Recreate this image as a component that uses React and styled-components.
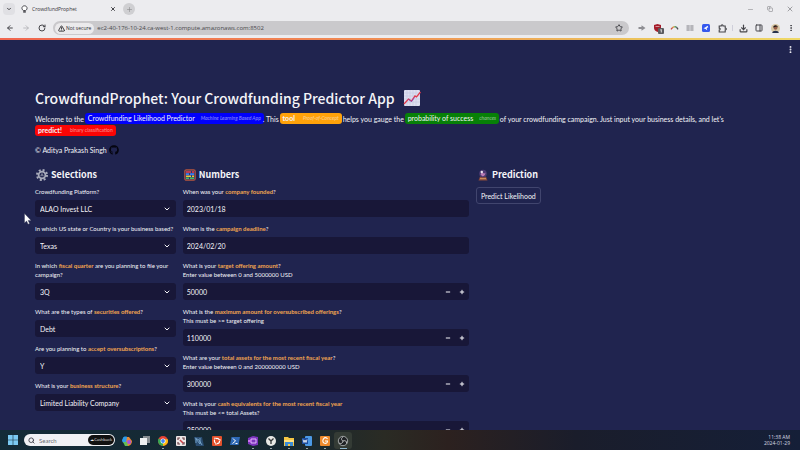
import React, { useState } from 'react';
import styled, { createGlobalStyle } from 'styled-components';
import {
  ArrowLeft, ArrowRight, ChevronDown, Copy, Download, EllipsisVertical, Minus, PanelRight, Plus,
  Puzzle, RotateCw, Search, Star, TriangleAlert, X,
} from 'lucide-react';
import { FaGithub } from 'react-icons/fa';

const GlobalStyle = createGlobalStyle`
  * { box-sizing: border-box; }
  body { margin: 0; background: #20244f; }
  button, input, select { font: inherit; color: inherit; margin: 0; }
`;

const Screen = styled.div`
  display: flex;
  flex-direction: column;
  height: 100vh;
  overflow: hidden;
  font-family: Lato, "Open Sans", sans-serif;
  font-size: 7px;
  color: #f4f4f8;
`;

/* Browser chrome */
const BrowserHeader = styled.header`
  flex: none;
  color: #45454a;
  background: #ececef;
  font-family: "Open Sans", sans-serif;
`;
const TabStrip = styled.div`
  display: flex;
  align-items: center;
  height: 18px;
  padding: 0 4px 0 3px;
`;
const IconButton = styled.button`
  display: flex;
  flex: none;
  align-items: center;
  justify-content: center;
  width: 12px;
  height: 12px;
  padding: 0;
  border: 0;
  border-radius: ${(p) => (p.$square ? 4 : 6)}px;
  background: ${(p) => p.$fill || 'transparent'};
  color: ${(p) => p.$tone || 'inherit'};
`;
const Tab = styled.div`
  display: flex;
  align-items: center;
  gap: 4px;
  width: 98px;
  margin: 0 4px 0 6px;
`;
const TabTitle = styled.span`
  flex: 1;
  font-size: 5px;
  line-height: 8px;
  color: #333337;
`;
const Spacer = styled.div`flex: 1;`;
const WindowControls = styled.div`
  display: flex;
  gap: 8px;
`;
const Toolbar = styled.div`
  display: flex;
  align-items: center;
  height: 20px;
  padding: 0 3px 0 4px;
`;
const NavButtons = styled.div`
  display: flex;
  gap: 4px;
  margin-right: 5px;
`;
const AddressBar = styled.div`
  display: flex;
  flex: 1;
  align-items: center;
  gap: 3px;
  height: 14px;
  padding: 0 4px 0 2px;
  border-radius: 7px;
  background: #cac9cc;
`;
const Security = styled.button`
  display: flex;
  align-items: center;
  gap: 1px;
  height: 11px;
  padding: 0 3px;
  border: 0;
  border-radius: 6px;
  background: #ebeaec;
  font-size: 5px;
  color: #29292d;
`;
const Address = styled.input`
  flex: 1;
  min-width: 0;
  height: 12px;
  padding: 0;
  border: 0;
  outline: 0;
  background: transparent;
  font-size: 6px;
  color: #47474b;
`;
const Extensions = styled.div`
  display: flex;
  align-items: center;
  gap: 4px;
  margin-left: 7px;
`;
const ToolbarRule = styled.span`
  width: 1px;
  height: 6px;
  background: #cfcfda;
`;
const Accent = styled.div`
  height: 2px;
  background: linear-gradient(90deg, #f0664f, #f08a54 45%, #ecc35c 80%, #efd968);
`;

/* App */
const AppView = styled.div`
  flex: 1;
  min-height: 0;
  overflow: hidden;
  background: #20244f;
`;
const AppBar = styled.div`
  display: flex;
  justify-content: flex-end;
  padding: 3px 4px;
`;
const Main = styled.main`
  padding: 28px 38px 0 35px;
`;
const Title = styled.h1`
  display: flex;
  align-items: center;
  gap: 8px;
  margin: 0 0 3px;
  font: 500 14px/24px "Noto Sans CJK SC", sans-serif;
`;
const Intro = styled.p`
  margin: 0;
  line-height: 12px;
`;
const Pill = styled.span`
  display: inline-flex;
  align-items: center;
  gap: ${(p) => p.$gap || 6}px;
  height: 11px;
  margin: 0 ${(p) => (p.$tight ? -1 : 0)}px;
  padding: 0 3px;
  border-radius: 3px;
  line-height: 11px;
  font-weight: ${(p) => (p.$strong ? 700 : 400)};
  vertical-align: top;
  background: ${(p) => p.$color};
`;
const PillNote = styled.small`
  font-size: 5px;
  font-weight: 400;
  font-style: ${(p) => (p.$italic ? 'italic' : 'normal')};
  opacity: 0.55;
`;
const Credit = styled.p`
  display: flex;
  align-items: center;
  gap: 2px;
  margin: 7px 0 12px;
  line-height: 12px;
`;
const GithubLink = styled.a`
  display: flex;
  color: #050510;
`;
const Columns = styled.div`
  display: flex;
  gap: 7px;
`;
const Column = styled.section`
  flex: 1 1 calc(${(p) => p.$share}% - 7px);
  min-width: 0;
`;
const Heading = styled.h2`
  display: flex;
  align-items: center;
  gap: 3px;
  margin: 0 0 5px 1px;
  font: 700 9px/14px "Noto Sans CJK SC", sans-serif;
`;
const Field = styled.div`
  margin-bottom: 7px;
`;
const Label = styled.label`
  display: block;
  padding-bottom: 4px;
  font-size: 6px;
  line-height: 9px;
`;
const Key = styled.strong`
  font-weight: 700;
  color: #f2a550;
`;
const Help = styled.span`
  display: block;
`;
const Control = styled.div`
  display: flex;
  align-items: center;
  height: 17px;
  border-radius: 3px;
  background: #181738;
`;
const SelectControl = styled(Control)`
  display: grid;
  & > * { grid-area: 1 / 1; }
`;
const Select = styled.select`
  width: 100%;
  height: 17px;
  padding: 0 16px 0 5px;
  border: 0;
  outline: 0;
  appearance: none;
  background: transparent;
  option { background: #181738; }
`;
const Chevron = styled(ChevronDown)`
  justify-self: end;
  margin-right: 5px;
  pointer-events: none;
`;
const TextInput = styled.input`
  flex: 1;
  min-width: 0;
  height: 17px;
  padding: 0 4px;
  border: 0;
  outline: 0;
  background: transparent;
`;
const StepButton = styled(IconButton)`
  width: 14px;
  height: 17px;
`;
const PredictButton = styled.button`
  height: 17px;
  padding: 0 4px;
  border: 1px solid #41456e;
  border-radius: 3px;
  background: #20244f;
`;

/* Taskbar */
const Taskbar = styled.footer`
  display: flex;
  flex: none;
  align-items: center;
  height: 20px;
  padding: 0 10px 0 7px;
  background: linear-gradient(90deg, #142b38, #162832 35%, #2a2b24 48%, #2c211f 56%, #1a1d2b 72%, #151f38);
`;
const TaskSearch = styled.label`
  display: flex;
  align-items: center;
  gap: 4px;
  width: 91px;
  height: 12px;
  margin: 0 3px 0 5px;
  padding: 0 1px 0 4px;
  border-radius: 6px;
  background: #f1f1f5;
  color: #3c3c46;
`;
const TaskSearchInput = styled.input`
  flex: 1;
  min-width: 0;
  padding: 0;
  border: 0;
  outline: 0;
  background: transparent;
  font-size: 6px;
  &::placeholder { color: #6b6b74; opacity: 1; }
`;
const SearchBadge = styled.span`
  padding: 0 2px;
  border-radius: 5px;
  background: #111;
  color: #e8e8ee;
  font: 4px/10px "Open Sans", sans-serif;
`;
const TaskButton = styled.button`
  display: flex;
  flex-direction: column;
  align-items: center;
  justify-content: flex-end;
  gap: 1px;
  flex: none;
  width: 18px;
  height: 17px;
  padding: 0;
  border: 0;
  border-radius: 3px;
  background: ${(p) => (p.$active ? '#343b35' : 'transparent')};
  &::after {
    content: '';
    width: ${(p) => (p.$active ? 7 : 2)}px;
    height: 1px;
    background: ${(p) => (p.$active ? '#8fb8d0' : p.$open ? '#9aa5a9' : 'transparent')};
  }
`;
const TaskIcons = styled.nav`
  display: flex;
`;
const Clock = styled.time`
  font: 5px/6px "Open Sans", sans-serif;
  text-align: right;
  color: #d8dae2;
`;
const ClockLine = styled.span`display: block;`;
const Pointer = styled.svg`
  position: absolute;
  left: 24px;
  top: 213px;
`;

const ChartIcon = () => (
  <svg width="18" height="18" viewBox="0 0 18 18" aria-hidden="true">
    <rect x="1" y="1" width="16" height="16" rx="1" fill="#dddff0" />
    <path d="M4 1v16M7 1v16M10 1v16M13 1v16M1 4h16M1 7h16M1 10h16M1 13h16" stroke="#c3c6e0" strokeWidth=".6" />
    <path d="M1 15l4.500-5 3 2 3.500-5 1.500 1 4-5" fill="none" stroke="#e23a4c" strokeWidth="1.3" />
    <path d="M5.500 10.500l3 2 3-4" fill="none" stroke="#6a4de0" strokeWidth=".7" />
  </svg>
);
const GearIcon = () => (
  <svg width="12" height="12" viewBox="0 0 12 12" aria-hidden="true">
    <circle cx="6" cy="6" r="5" fill="none" stroke="#a9acbb" strokeWidth="2" strokeDasharray="2 1.93" />
    <circle cx="6" cy="6" r="3.4" fill="none" stroke="#a9acbb" strokeWidth="1.8" />
    <path d="M6 3v3l2.6 1.5M6 6L3.4 7.500" stroke="#8a8da0" strokeWidth=".7" fill="none" />
    <circle cx="6" cy="6" r="1.200" fill="#74788f" />
  </svg>
);
const AbacusIcon = () => (
  <svg width="12" height="12" viewBox="0 0 12 12" aria-hidden="true">
    <rect x=".8" y=".8" width="10.400" height="10.400" rx="1.500" fill="#263a70" stroke="#b6543c" strokeWidth="1.200" />
    <path d="M2 3h5M8 3h2" stroke="#ee3c46" strokeWidth="1.700" />
    <path d="M2 5.200h3M6 5.200h4" stroke="#3a7cf4" strokeWidth="1.700" />
    <path d="M2 7.300h5M8 7.300h2" stroke="#f3c13b" strokeWidth="1.500" />
    <path d="M2 9.300h3M6 9.300h4" stroke="#44c065" strokeWidth="1.500" />
  </svg>
);
const CrystalIcon = () => (
  <svg width="12" height="12" viewBox="0 0 12 12" aria-hidden="true">
    <path d="M3 7.500h6l1.500 4h-9z" fill="#8a4a3c" />
    <circle cx="6" cy="4.500" r="3.800" fill="#4b3a72" />
    <path d="M3.500 5.500c2-4 3 1 5-2-.3 3-1.500 4-3.200 3.700z" fill="#b779b4" />
    <circle cx="4.800" cy="3" r="1.200" fill="#e9e2f0" />
    <path d="M3 9.700h6" stroke="#d69a65" />
  </svg>
);
const BulbIcon = () => (
  <svg width="7" height="8" viewBox="0 0 7 8" fill="none" stroke="#39393e" strokeWidth=".9" aria-hidden="true">
    <path d="M2.300 5.500C0 4 .8.800 3.500.800s3.500 3.200 1.200 4.700z" fill="#fff" /><path d="M2.200 6.900h2.600" strokeWidth="1.400" />
  </svg>
);
const ShareIcon = () => (
  <svg width="8" height="8" viewBox="0 0 8 8" fill="#8e8e93" aria-hidden="true"><path d="M.5 3h3V1.300L7.500 4 3.500 6.700V5h-3z" /></svg>
);
const ShieldIcon = () => (
  <svg width="11" height="11" viewBox="0 0 11 11" aria-hidden="true">
    <path d="M1 2l3.500-1L8 2v3c0 2-1.500 3.300-3.500 4C2.500 8.300 1 7 1 5z" fill="#a51d2b" />
    <path d="M2.500 3.500h4" stroke="#e8c8cc" strokeWidth=".7" />
    <rect x="5" y="5" width="6" height="6" rx="1" fill="#5b5b60" /><path d="M7.300 7l1-.5v3" stroke="#fff" strokeWidth=".8" fill="none" />
  </svg>
);
const ArcIcon = () => (
  <svg width="9" height="8" viewBox="0 0 9 8" fill="none" strokeWidth="1.300" aria-hidden="true">
    <path d="M1 5.300l1.700-2" stroke="#c6453b" /><path d="M2.700 3.300L4.500 2.600" stroke="#d9a13b" /><path d="M4.500 2.600L6.500 3.200" stroke="#3b8d52" /><path d="M6.500 3.200L8 5.400" stroke="#4c4c50" />
  </svg>
);
const BookIcon = () => (
  <svg width="8" height="8" viewBox="0 0 8 8" fill="#b5b5ba" aria-hidden="true"><path d="M.5 1h3.200v6H.5zM4.300 1h3.200v6H4.300z" /></svg>
);
const BlueIcon = () => (
  <svg width="8" height="8" viewBox="0 0 8 8" aria-hidden="true"><rect width="8" height="8" rx="1.500" fill="#3558ee" /><path d="M1.500 4.300l2-1 2-1.600.8 1.600-1.600.7.500 2.200-1.700-1.200z" fill="#fff" /></svg>
);
const PuzzleIcon = () => (
  <svg width="9" height="9" viewBox="0 0 9 9" fill="none" stroke="#45454a" strokeWidth="1.100" aria-hidden="true">
    <path d="M1.200 2h2c-.2-1.500 2-1.500 1.800 0h2.200v2.100c1.500-.2 1.500 2 0 1.800V8H1.200V6c1.300 0 1.300-1.900 0-1.900z" />
  </svg>
);
const AvatarIcon = () => (
  <svg width="9" height="9" viewBox="0 0 9 9" aria-hidden="true">
    <circle cx="4.500" cy="4.500" r="4.500" fill="#d8c8a6" /><path d="M1.200 9c.3-3 6.300-3 6.600 0z" fill="#27324e" />
    <circle cx="4.500" cy="3.800" r="2" fill="#9a6048" /><path d="M2.300 3.500C2 .5 7 .5 6.700 3.500L5.500 2.400z" fill="#201818" />
  </svg>
);

const taskIcons = [
  { name: 'Copilot', art: <><path d="M2 3c0-2 5-2 5 0l1 5H4C2 8 1 7 1 5z" fill="#2e9be8" /><path d="M6 2h2l3 4c0 3-2 5-5 5L5 8z" fill="#e78835" /><path d="M2 7h4l1 4H4z" fill="#63bc58" /><circle cx="8" cy="7" r="2" fill="#a64fe0" /></> },
  { name: 'Task view', art: <><rect x="4" y="1" width="7" height="7" fill="#868d92" /><rect x="1" y="3" width="7" height="7" fill="#eef0f1" /></> },
  { name: 'Chrome', open: true, art: <><circle cx="6" cy="6" r="5" fill="#e34335" /><path d="M6 6L1.600 3.600A5 5 0 0 0 6 11z" fill="#35a853" /><path d="M6 11a5 5 0 0 0 4.700-6.700H6z" fill="#fabc12" /><circle cx="6" cy="6" r="2.500" fill="#fff" /><circle cx="6" cy="6" r="1.900" fill="#4286f5" /></> },
  { name: 'Capture', art: <><rect x="1" y="1" width="10" height="10" rx="1" fill="#eee9e8" /><path d="M3 5V3h2M7 3h2v2M3 7v2h2M7 9h2V7" fill="none" stroke="#6a4147" strokeWidth="1.200" /><path d="M5 5l3 3" stroke="#cf4148" strokeWidth="1.500" /></> },
  { name: 'Workbench', art: <><path d="M1 2h8l2 9H3z" fill="#2a4d72" /><path d="M2 3l4 2 3 5M3 8V4l4 5V3" fill="none" stroke="#7ba9cf" strokeWidth=".9" /></> },
  { name: 'Ubuntu', art: <><rect x="1" y="1" width="10" height="10" rx="1" fill="#e3502b" /><circle cx="6" cy="6" r="2.600" fill="none" stroke="#fff" strokeWidth="1.200" strokeDasharray="4 1.400" /><circle cx="9" cy="5" r=".8" fill="#fff" /><circle cx="4" cy="3.200" r=".8" fill="#fff" /><circle cx="5" cy="9" r=".8" fill="#fff" /></> },
  { name: 'PowerShell', art: <><path d="M2.500 2H11L9.500 10H1z" fill="#2e68b5" /><path d="M4 3.500L6.500 6 3.500 8.500M6.500 8.500H8.500" fill="none" stroke="#fff" /></> },
  { name: 'Visual Studio', open: true, art: <><path d="M1 3l5-2 5 1v8L6 11 1 9z" fill="#7c35bd" /><path d="M4 4h5v4H4z" fill="none" stroke="#e4b8ff" /><path d="M1 6h3" stroke="#cc71ef" strokeWidth="2" /></> },
  { name: 'Clock', open: true, art: <><circle cx="6" cy="6" r="5" fill="#e7e8e6" /><path d="M3.500 3.500L6 6l2.500-2.500M6 6v3" fill="none" stroke="#323638" strokeWidth="1.300" /></> },
  { name: 'Explorer', open: true, art: <><path d="M1 2h4l1 1h5v8H1z" fill="#f5c745" /><path d="M2 6h8v5H7V9H5v2H2z" fill="#3d8dd7" /><path d="M1 5h10v2H1z" fill="#ffe184" /></> },
  { name: 'Word', open: true, art: <><rect x="4" y="1" width="7" height="10" rx="1" fill="#4c99e5" /><rect x="1" y="3" width="6" height="6" fill="#1c4c9e" /><path d="M2 4.500l1 3 1-2.500 1 2.500 1-3" fill="none" stroke="#fff" strokeWidth=".8" /></> },
  { name: 'Grapher', open: true, art: <><rect x="1" y="1" width="10" height="10" rx="1" fill="#f08a2c" /><path d="M8.500 4C6-.1 1.800 6 5 8c2 1 3.500 0 3.500-2H6" fill="none" stroke="#fff" strokeWidth="1.100" /></> },
  { name: 'OBS', active: true, art: <><circle cx="6" cy="6" r="4.700" fill="#202225" stroke="#b9bdbc" strokeWidth=".8" /><path d="M6 6c-2-1-2-3 0-4M6 6c2-1 4 0 3.500 2.500M6 6c0 2-2 3.300-4 2" fill="none" stroke="#c7cac9" strokeWidth=".9" /></> },
];

const selections = [
  { id: 'platform', label: 'Crowdfunding Platform?', value: 'ALAO Invest LLC' },
  { id: 'state', label: 'In which US state or Country is your business based?', value: 'Texas' },
  { id: 'quarter', label: <>In which <Key>fiscal quarter</Key> are you planning to file your campaign?</>, value: '3Q' },
  { id: 'securities', label: <>What are the types of <Key>securities offered</Key>?</>, value: 'Debt' },
  { id: 'over', label: <>Are you planning to <Key>accept oversubscriptions</Key>?</>, value: 'Y' },
  { id: 'structure', label: <>What is your <Key>business structure</Key>?</>, value: 'Limited Liability Company' },
];
const numbers = [
  { id: 'founded', before: 'When was your ', accent: 'company founded', after: '?', value: '2023/01/18' },
  { id: 'deadline', before: 'When is the ', accent: 'campaign deadline', after: '?', value: '2024/02/20' },
  { id: 'target', before: 'What is your ', accent: 'target offering amount', after: '?', help: 'Enter value between 0 and 5000000 USD', value: 50000 },
  { id: 'maximum', before: 'What is the ', accent: 'maximum amount for oversubscribed offerings', after: '?', help: 'This must be >= target offering', value: 110000 },
  { id: 'assets', before: 'What are your ', accent: 'total assets for the most recent fiscal year', after: '?', help: 'Enter value between 0 and 200000000 USD', value: 300000 },
  { id: 'cash', before: 'What is your ', accent: 'cash equivalents for the most recent fiscal year', after: '', help: 'This must be <= total Assets?', value: 250000 },
];

function SelectField({ id, label, value }) {
  return (
    <Field>
      <Label htmlFor={id}>{label}</Label>
      <SelectControl>
        <Select id={id} defaultValue={value}><option>{value}</option></Select>
        <Chevron size={8} strokeWidth={3} />
      </SelectControl>
    </Field>
  );
}

function NumberField({ id, before, accent, after, help, value }) {
  const [current, setCurrent] = useState(value);
  const numeric = typeof value === 'number';
  const step = (n) => setCurrent((v) => Number(v) + n);
  return (
    <Field>
      <Label htmlFor={id}>
        {before}<Key>{accent}</Key>{after}
        {help && <Help>{help}</Help>}
      </Label>
      <Control>
        <TextInput id={id} value={current} onChange={(e) => setCurrent(e.target.value)} />
        {numeric && (
          <>
            <StepButton type="button" aria-label="Decrease" onClick={() => step(-1)}><Minus size={6} strokeWidth={4} /></StepButton>
            <StepButton type="button" aria-label="Increase" onClick={() => step(1)}><Plus size={6} strokeWidth={4} /></StepButton>
          </>
        )}
      </Control>
    </Field>
  );
}

export default function App() {
  return (
    <Screen>
      <GlobalStyle />
      <BrowserHeader>
        <TabStrip>
          <IconButton $square $fill="#e0e0e4" aria-label="Search tabs"><ChevronDown size={6} strokeWidth={4} /></IconButton>
          <Tab>
            <BulbIcon />
            <TabTitle>CrowdfundProphet</TabTitle>
            <IconButton aria-label="Close tab"><X size={6} strokeWidth={4} /></IconButton>
          </Tab>
          <IconButton $fill="#cfcfd2" $tone="#88888c" aria-label="New tab"><Plus size={7} /></IconButton>
          <Spacer />
          <WindowControls>
            <IconButton $tone="#8a8a8e" aria-label="Minimize"><Minus size={7} /></IconButton>
            <IconButton $tone="#77777b" aria-label="Restore"><Copy size={6} /></IconButton>
            <IconButton $tone="#77777b" aria-label="Close"><X size={8} /></IconButton>
          </WindowControls>
        </TabStrip>
        <Toolbar>
          <NavButtons>
            <IconButton aria-label="Back"><ArrowLeft size={8} strokeWidth={3} /></IconButton>
            <IconButton $tone="#a5a5a9" aria-label="Forward"><ArrowRight size={8} /></IconButton>
            <IconButton aria-label="Reload"><RotateCw size={8} strokeWidth={3} /></IconButton>
          </NavButtons>
          <AddressBar>
            <Security><TriangleAlert size={7} strokeWidth={3} />Not secure</Security>
            <Address aria-label="Address" defaultValue="ec2-40-176-10-24.ca-west-1.compute.amazonaws.com:8502" />
            <IconButton aria-label="Bookmark"><Star size={8} strokeWidth={3} /></IconButton>
          </AddressBar>
          <Extensions>
            <IconButton aria-label="Share"><ShareIcon /></IconButton>
            <IconButton aria-label="Shield"><ShieldIcon /></IconButton>
            <IconButton aria-label="Arc"><ArcIcon /></IconButton>
            <IconButton aria-label="Reader"><BookIcon /></IconButton>
            <IconButton aria-label="Assistant"><BlueIcon /></IconButton>
            <IconButton aria-label="Extensions"><PuzzleIcon /></IconButton>
            <ToolbarRule />
            <IconButton aria-label="Downloads"><Download size={9} strokeWidth={3} /></IconButton>
            <IconButton aria-label="Side panel"><PanelRight size={8} strokeWidth={3} /></IconButton>
            <IconButton aria-label="Profile"><AvatarIcon /></IconButton>
            <IconButton aria-label="Browser menu"><EllipsisVertical size={8} strokeWidth={3} /></IconButton>
          </Extensions>
        </Toolbar>
        <Accent />
      </BrowserHeader>

      <AppView>
        <AppBar><IconButton aria-label="App menu"><EllipsisVertical size={9} strokeWidth={3} /></IconButton></AppBar>
        <Main>
          <Title>CrowdfundProphet: Your Crowdfunding Predictor App <ChartIcon /></Title>
          <Intro>
            Welcome to the{' '}
            <Pill $tight $color="#0000fb">Crowdfunding Likelihood Predictor <PillNote $italic>Machine Learning Based App</PillNote></Pill>
            . This{' '}
            <Pill $tight $strong $gap={8} $color="#ffa20a">tool <PillNote $italic>Proof-of-Concept</PillNote></Pill>
            {' '}helps you gauge the{' '}
            <Pill $tight $color="#078007">probability of success <PillNote $italic>chances</PillNote></Pill>
            {' '}of your crowdfunding campaign. Just input your business details, and let's{' '}
            <Pill $strong $gap={8} $color="#fb0505">predict! <PillNote>binary classification</PillNote></Pill>
          </Intro>
          <Credit>
            © Aditya Prakash Singh
            <GithubLink href="#github" aria-label="GitHub"><FaGithub size={10} /></GithubLink>
          </Credit>
          <Columns>
            <Column $share={20}>
              <Heading><GearIcon />Selections</Heading>
              {selections.map((s) => <SelectField key={s.id} {...s} />)}
            </Column>
            <Column $share={40}>
              <Heading><AbacusIcon />Numbers</Heading>
              {numbers.map((n) => <NumberField key={n.id} {...n} />)}
            </Column>
            <Column $share={40}>
              <Heading><CrystalIcon />Prediction</Heading>
              <PredictButton type="button">Predict Likelihood</PredictButton>
            </Column>
          </Columns>
        </Main>
      </AppView>

      <Taskbar>
        <IconButton aria-label="Start">
          <svg width="10" height="10" viewBox="0 0 10 10" fill="#7ccaf4"><path d="M0 0h4.700v4.700H0zM5.300 0H10v4.700H5.300zM0 5.300h4.700V10H0zM5.300 5.300H10V10H5.300z" /></svg>
        </IconButton>
        <TaskSearch>
          <Search size={7} strokeWidth={3} />
          <TaskSearchInput type="text" aria-label="Search" placeholder="Search" />
          <SearchBadge>☁Cashback</SearchBadge>
        </TaskSearch>
        <TaskIcons>
          {taskIcons.map((t) => (
            <TaskButton key={t.name} $open={t.open} $active={t.active} aria-label={t.name}>
              <svg width="12" height="12" viewBox="0 0 12 12">{t.art}</svg>
            </TaskButton>
          ))}
        </TaskIcons>
        <Spacer />
        <Clock dateTime="2024-01-29T11:38"><ClockLine>11:38 AM</ClockLine><ClockLine>2024-01-29</ClockLine></Clock>
      </Taskbar>

      <Pointer width="8" height="12" viewBox="0 0 8 12" aria-hidden="true">
        <path d="M.5.500v9.500l2.100-2 1.500 3.200 1.500-.7-1.500-3.100h3z" fill="#fff" stroke="#333754" strokeWidth=".4" />
      </Pointer>
    </Screen>
  );
}
